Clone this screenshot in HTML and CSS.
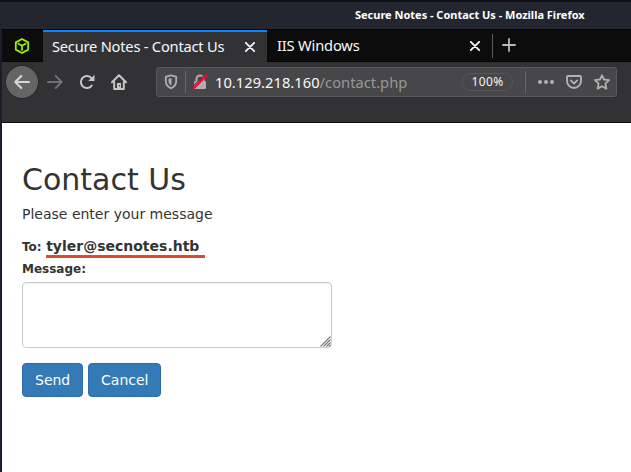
FILE: index.html
```html
<!DOCTYPE html>
<html lang="en">
<head>
<meta charset="utf-8">
<title>Secure Notes - Contact Us</title>
<link rel="stylesheet" href="styles.css">
</head>
<body>
<div class="window">
  <header class="titlebar"><span class="title">Secure Notes - Contact Us - Mozilla Firefox</span></header>
  <nav class="tabs">
    <div class="pinned">
      <svg width="16" height="16" viewBox="0 0 16 16" fill="none" stroke="#9fef00" stroke-width="1.8" stroke-linejoin="round" stroke-linecap="round"><path d="M8 1L14.2 4.4V11.6L8 15L1.8 11.6V4.4Z"/><path d="M4.4 5.8L8 7.8L11.6 5.8M8 7.8V12"/></svg>
    </div>
    <div class="tab active">
      <span class="tab-label first">Secure Notes - Contact Us</span>
      <svg class="close" width="10" height="10" viewBox="0 0 10 10"><path d="M.8 .8L9.2 9.2M9.2 .8L.8 9.2"/></svg>
    </div>
    <div class="tab">
      <span class="tab-label second">IIS Windows</span>
      <svg class="close" width="10" height="10" viewBox="0 0 10 10"><path d="M.8 .8L9.2 9.2M9.2 .8L.8 9.2"/></svg>
    </div>
    <div class="new-tab">
      <svg width="14" height="14" viewBox="0 0 14 14" stroke="#b9b9ba" stroke-width="1.8" stroke-linecap="round"><path d="M7 1V13M1 7H13"/></svg>
    </div>
  </nav>
  <div class="toolbar">
    <div class="back">
      <svg width="16" height="16" viewBox="0 0 16 16" fill="none" stroke="#d8d8d9" stroke-width="2" stroke-linecap="round" stroke-linejoin="round"><path d="M15 8H1.5M7.3 2L1.3 8L7.3 14"/></svg>
    </div>
    <svg class="forward" width="16" height="16" viewBox="0 0 16 16" fill="none" stroke="#717172" stroke-width="2" stroke-linecap="round" stroke-linejoin="round"><path d="M1 8H14.5M8.7 2L14.7 8L8.7 14"/></svg>
    <svg class="reload" width="16" height="16" viewBox="0 0 16 16" fill="none" stroke="#c6c6c7" stroke-width="2" stroke-linecap="round" stroke-linejoin="round"><path d="M12.7 11.6A6 6 0 1 1 12.5 4.2"/><path fill="#c6c6c7" stroke="none" d="M15.5 .8V7H9.2Z"/></svg>
    <svg class="home" width="16" height="16" viewBox="0 0 16 16" fill="none" stroke="#c6c6c7" stroke-width="2" stroke-linecap="round" stroke-linejoin="round"><path d="M1 8.2L8 1.3L15 8.2M3.2 8V15H12.8V8"/><path fill="#c6c6c7" stroke="none" d="M6 9H10V15H6Z"/><path stroke="#323234" stroke-width="1" d="M8.5 11.5V12"/></svg>
    <div class="urlbar">
      <svg class="shield" width="14" height="16" viewBox="0 0 14 16" fill="none" stroke="#aeaeaf" stroke-width="1.8" stroke-linejoin="round"><path d="M1.8 2.7Q4.5 2.4 7 1.3Q9.5 2.4 12.2 2.7V7Q12.2 12 7 14.3Q1.8 12 1.8 7Z"/><path fill="#aeaeaf" stroke="none" d="M7.5 4Q5.7 4.6 4.5 4.8V7Q4.5 10 7.5 11.5Z"/></svg>
      <span class="divider"></span>
      <svg class="lock" width="16" height="16" viewBox="0 0 16 16" fill="none"><path d="M4.5 7V5A3.5 3.5 0 0 1 11.5 5V7" stroke="#aeaeaf" stroke-width="2"/><rect x="2" y="7" width="12" height="8" rx="1.2" fill="#aeaeaf"/><path d="M.2 13.2L12.5 .8" stroke="#48484a" stroke-width="1.2"/><path d="M1.5 14.5L14.5 1.5" stroke="#ff0039" stroke-width="2.1" stroke-linecap="round"/></svg>
      <span class="url">10.129.218.160<span class="path">/contact.php</span></span>
      <span class="zoom">100%</span>
      <span class="divider right"></span>
      <svg class="dots" width="16" height="16" viewBox="0 0 16 16" fill="#b1b1b2"><circle cx="2" cy="8" r="2"/><circle cx="8" cy="8" r="2"/><circle cx="14" cy="8" r="2"/></svg>
      <svg class="pocket" width="16" height="16" viewBox="0 0 16 16" fill="none" stroke="#b1b1b2" stroke-width="1.9" stroke-linecap="round" stroke-linejoin="round"><path d="M2 2H14Q15 2 15 3V7A7 7 0 0 1 1 7V3Q1 2 2 2Z"/><path d="M4.8 6.4L8 9.5L11.2 6.4"/></svg>
      <svg class="star" width="16" height="16" viewBox="0 0 16 16" fill="none" stroke="#b1b1b2" stroke-width="1.8" stroke-linejoin="round"><path d="M8 1.3L10 5.5L15 6.1L11.4 9.6L12.4 14.6L8 12.2L3.6 14.6L4.6 9.6L1 6.1L6 5.5Z"/></svg>
    </div>
  </div>
  <main class="page">
    <h2>Contact Us</h2>
    <p class="intro">Please enter your message</p>
    <form>
      <div class="recipient"><b>To:</b> <strong>tyler@secnotes.htb</strong></div>
      <label for="message">Message:</label>
      <div class="field">
        <textarea id="message"></textarea>
        <svg class="grip" width="11" height="11" viewBox="0 0 11 11" stroke="#777" stroke-width="1.1"><path d="M.5 10.5L10.5 .5M3.5 10.5L10.5 3.5M6.5 10.5L10.5 6.5M9 10.5L10.5 9"/></svg>
      </div>
      <div class="actions"><button type="button">Send</button><button type="button" class="cancel">Cancel</button></div>
    </form>
  </main>
</div>
</body>
</html>
```
FILE: styles.css
```css
* { box-sizing: border-box; }
body { margin: 0; overflow: hidden; background: #1a1e2a; }
svg { display: block; flex: none; }
.window { height: 472px; display: flex; flex-direction: column; padding-left: 2px; font-family: "Noto Sans", sans-serif; }
.titlebar { height: 29px; flex: none; margin-left: -2px; border-top: 2px solid #111217; background: #23262f; padding-left: 355px; color: #fff; }
.title { display: block; width: 230px; font-size: 11px; font-weight: 700; line-height: 26px; white-space: nowrap; letter-spacing: -.01px; }
.tabs { height: 33px; flex: none; display: flex; background: #0c0c0d; border-top: 1px solid #050505; border-bottom: 1px solid #050505; }
.pinned { width: 41px; padding: 8px 0 0 12px; }
.tab { width: 225px; display: flex; align-items: center; justify-content: space-between; padding: 0 12px 0 10px; color: #f9f9fa; }
.tab.active { width: 224px; height: 33px; background: #323234; border-top: 2px solid #0a84ff; padding: 0 12px 2px 9px; }
.tab-label { font-size: 14.67px; line-height: 20px; white-space: nowrap; margin-top: -2px; }
.first { letter-spacing: -.22px; }
.second { letter-spacing: -.17px; }
.close { fill: none; stroke: #f2f2f3; stroke-width: 1.9; stroke-linecap: round; }
.new-tab { height: 24px; margin-top: 4px; border-left: 1px solid #5b5b5c; padding: 4px 0 0 9px; }
.toolbar { height: 61px; flex: none; display: flex; align-items: flex-start; background: #323234; border-bottom: 1px solid #0b0b0c; }
.back { width: 32px; height: 32px; margin: 4px 0 0 4px; border-radius: 50%; background: #656566; box-shadow: 0 0 0 1px #29292a; display: grid; place-items: center; flex: none; }
.forward { margin: 12px 0 0 9px; }
.reload { margin: 12px 0 0 16px; }
.home { margin: 12px 0 0 16px; }
.urlbar { width: 461px; height: 30px; margin: 5px 0 0 29px; background: #474749; border: 1px solid #59595b; border-radius: 3px; display: flex; align-items: center; }
.shield { margin-left: 7px; }
.divider { width: 1px; height: 22px; margin-left: 7px; background: #666668; flex: none; }
.lock { margin-left: 6px; }
.url { width: 247px; margin-left: 7px; font-size: 14.67px; line-height: 20px; letter-spacing: .04px; color: #f9f9fa; white-space: nowrap; flex: none; }
.path { color: #98989a; }
.zoom { width: 51px; height: 18px; border: 1px solid #57575a; border-radius: 9px; font-size: 12px; line-height: 16px; letter-spacing: .35px; text-align: center; color: #f4f4f5; flex: none; }
.divider.right { margin-left: 12px; }
.dots, .pocket, .star { margin-left: 12px; }
.page { flex: 1; background: #fff; padding: 40px 20px 0; color: #333; font: 14px/20px "DejaVu Sans", sans-serif; }
h2 { margin: 0 0 7px; font-size: 30px; line-height: 34px; font-weight: 400; }
.intro { margin: 0; }
form { margin-top: 12px; }
.recipient { height: 22px; display: flex; align-items: baseline; gap: 4.5px; }
.recipient b { font-size: 12px; }
.recipient strong { width: 159px; height: 22px; border-bottom: 3px solid #dc4b32; line-height: 20px; }
label { display: block; margin-top: 1px; font-size: 12px; font-weight: 700; line-height: 20px; }
.field { position: relative; width: 310px; margin-top: 3px; }
textarea { display: block; width: 310px; height: 66px; margin: 0; border: 1px solid #ccc; border-radius: 4px; box-shadow: inset 0 1px 1px rgba(0,0,0,.075); resize: none; }
.grip { position: absolute; right: 1px; bottom: 1px; }
.actions { display: flex; gap: 5px; margin-top: 15px; }
button { height: 34px; padding: 6px 12px; border: 1px solid #2e6da4; border-radius: 4px; background: #337ab7; color: #fff; font: 14px/20px "DejaVu Sans", sans-serif; }
.cancel { width: 73px; padding: 6px 0; }
```
